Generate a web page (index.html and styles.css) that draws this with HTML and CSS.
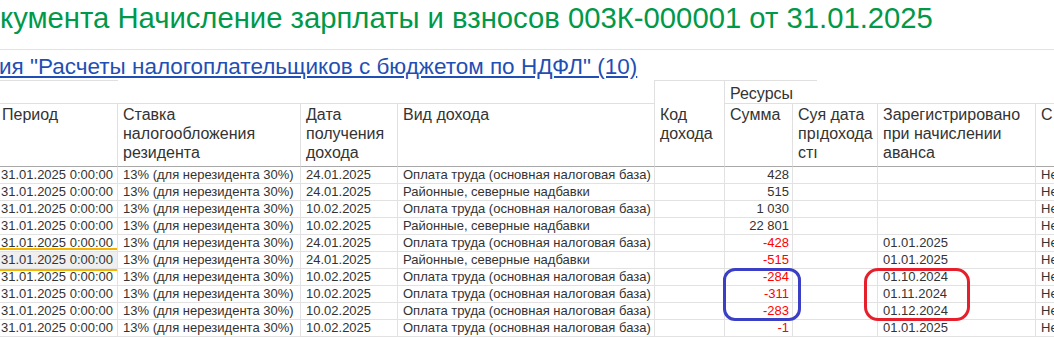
FILE: index.html
```html
<!DOCTYPE html>
<html lang="ru">
<head>
<meta charset="utf-8">
<title>Движения документа</title>
<link rel="stylesheet" href="styles.css">
</head>
<body>
<div class="title">кумента Начисление зарплаты и взносов 003К-000001 от 31.01.2025</div>
<div class="linkbar"><a class="link" href="#">ия "Расчеты налогоплательщиков с бюджетом по НДФЛ" (10)</a></div>
<div class="table">
  <div class="grid head">
    <div class="h-blank"></div>
    <div class="h-code">Код<br>дохода</div>
    <div class="h-res">Ресурсы</div>
    <div class="hc">Период</div>
    <div class="hc">Ставка<br>налогообложения<br>резидента</div>
    <div class="hc">Дата<br>получения<br>дохода</div>
    <div class="hc">Вид дохода</div>
    <div class="hc">Сумма</div>
    <div class="hc">Суя дата<br>прıдохода<br>стı</div>
    <div class="hc">Зарегистрировано<br>при начислении<br>аванса</div>
    <div class="hc last">С</div>
  </div>
  <div class="grid body">
    <div class="c c1">31.01.2025 0:00:00</div><div class="c">13% (для нерезидента 30%)</div><div class="c">24.01.2025</div><div class="c">Оплата труда (основная налоговая база)</div><div class="c"></div><div class="c num">428</div><div class="c"></div><div class="c"></div><div class="c last">Нет</div>
    <div class="c c1">31.01.2025 0:00:00</div><div class="c">13% (для нерезидента 30%)</div><div class="c">24.01.2025</div><div class="c">Районные, северные надбавки</div><div class="c"></div><div class="c num">515</div><div class="c"></div><div class="c"></div><div class="c last">Нет</div>
    <div class="c c1">31.01.2025 0:00:00</div><div class="c">13% (для нерезидента 30%)</div><div class="c">10.02.2025</div><div class="c">Оплата труда (основная налоговая база)</div><div class="c"></div><div class="c num">1&nbsp;030</div><div class="c"></div><div class="c"></div><div class="c last">Нет</div>
    <div class="c c1">31.01.2025 0:00:00</div><div class="c">13% (для нерезидента 30%)</div><div class="c">10.02.2025</div><div class="c">Районные, северные надбавки</div><div class="c"></div><div class="c num">22&nbsp;801</div><div class="c"></div><div class="c"></div><div class="c last">Нет</div>
    <div class="c c1">31.01.2025 0:00:00</div><div class="c">13% (для нерезидента 30%)</div><div class="c">24.01.2025</div><div class="c">Оплата труда (основная налоговая база)</div><div class="c"></div><div class="c num neg">-428</div><div class="c"></div><div class="c">01.01.2025</div><div class="c last">Нет</div>
    <div class="c c1 sel">31.01.2025 0:00:00</div><div class="c">13% (для нерезидента 30%)</div><div class="c">24.01.2025</div><div class="c">Районные, северные надбавки</div><div class="c"></div><div class="c num neg">-515</div><div class="c"></div><div class="c">01.01.2025</div><div class="c last">Нет</div>
    <div class="c c1">31.01.2025 0:00:00</div><div class="c">13% (для нерезидента 30%)</div><div class="c">10.02.2025</div><div class="c">Оплата труда (основная налоговая база)</div><div class="c"></div><div class="c num neg">-284</div><div class="c"></div><div class="c">01.10.2024</div><div class="c last">Нет</div>
    <div class="c c1">31.01.2025 0:00:00</div><div class="c">13% (для нерезидента 30%)</div><div class="c">10.02.2025</div><div class="c">Оплата труда (основная налоговая база)</div><div class="c"></div><div class="c num neg">-311</div><div class="c"></div><div class="c">01.11.2024</div><div class="c last">Нет</div>
    <div class="c c1">31.01.2025 0:00:00</div><div class="c">13% (для нерезидента 30%)</div><div class="c">10.02.2025</div><div class="c">Оплата труда (основная налоговая база)</div><div class="c"></div><div class="c num neg">-283</div><div class="c"></div><div class="c">01.12.2024</div><div class="c last">Нет</div>
    <div class="c c1">31.01.2025 0:00:00</div><div class="c">13% (для нерезидента 30%)</div><div class="c">10.02.2025</div><div class="c">Оплата труда (основная налоговая база)</div><div class="c"></div><div class="c num neg">-1</div><div class="c"></div><div class="c">01.01.2025</div><div class="c last">Нет</div>
  </div>
  <div class="mark mark-blue"></div>
  <div class="mark mark-red"></div>
</div>
</body>
</html>
```
FILE: styles.css
```css
* { box-sizing: border-box; }
html, body { margin: 0; padding: 0; }
body {
  width: 1054px;
  height: 357px;
  overflow: hidden;
  background: #fff;
  color: #333;
  font-family: "Liberation Sans", Arial, sans-serif;
}
.title {
  height: 50px;
  padding-top: 2px;
  border-bottom: 1px solid #e3e3e3;
  font-size: 29.25px;
  line-height: 32px;
  color: #00994a;
  white-space: nowrap;
}
.linkbar {
  height: 30px;
  padding-top: 4px;
  font-size: 22.5px;
  line-height: 26px;
  white-space: nowrap;
}
.link {
  color: #1f4fb4;
  text-decoration: underline;
  margin-left: -1px;
}
.table {
  position: relative;
  margin-left: -3px;
  width: 1110px;
}
.grid {
  display: grid;
  grid-template-columns: 121px 183px 97px 257px 70px 68px 85px 158px 60px;
}
.head {
  grid-template-rows: 24px 63px;
  font-size: 16px;
  line-height: 19px;
}
.h-blank {
  grid-column: 1 / 5;
  grid-row: 1;
  border-bottom: 1px solid #e0e0e0;
  border-right: 1px solid #e0e0e0;
  background: linear-gradient(#e0e0e0, #e0e0e0) no-repeat 0 0 / 121px 1px;
}
.h-code {
  grid-column: 5;
  grid-row: 1 / 3;
  border-top: 1px solid #e0e0e0;
  border-right: 1px solid #e0e0e0;
  border-bottom: 1px solid #a9a9a9;
  padding: 24px 0 0 5px;
}
.h-res {
  grid-column: 6 / 10;
  grid-row: 1;
  border-bottom: 1px solid #e0e0e0;
  padding: 4px 0 0 5px;
  background: linear-gradient(#e0e0e0, #e0e0e0) no-repeat 0 0 / 92px 1px;
}
.hc {
  grid-row: 2;
  border-right: 1px solid #e0e0e0;
  border-bottom: 1px solid #a9a9a9;
  padding: 1px 0 0 5px;
  white-space: nowrap;
  overflow: hidden;
}
.hc:nth-child(4) { grid-column: 1; }
.hc:nth-child(5) { grid-column: 2; }
.hc:nth-child(6) { grid-column: 3; }
.hc:nth-child(7) { grid-column: 4; }
.hc:nth-child(8) { grid-column: 6; }
.hc:nth-child(9) { grid-column: 7; }
.hc:nth-child(10) { grid-column: 8; }
.hc:nth-child(11) { grid-column: 9; }
.body {
  grid-auto-rows: 17px;
  font-size: 13px;
  line-height: 16px;
}
.c {
  border-right: 1px solid #e2e2e2;
  border-bottom: 1px solid #e2e2e2;
  padding: 0 5px;
  white-space: nowrap;
  overflow: hidden;
}
.c1 { padding-left: 4px; }
.last { border-right: 0; }
.num { text-align: right; padding-right: 3px; }
.neg { color: #f00; }
.sel {
  position: relative;
  overflow: visible;
  background: #efefef;
}
.sel::before,
.sel::after {
  content: "";
  position: absolute;
  left: 0;
  right: 0;
  height: 2px;
  background: #f5b400;
}
.sel::before { top: -4px; }
.sel::after { bottom: -3px; }
.mark {
  position: absolute;
  top: 188px;
  height: 53px;
  border: 3px solid;
}
.mark-blue {
  left: 726px;
  width: 78px;
  border-color: #3a3fc6;
  border-radius: 12px;
}
.mark-red {
  left: 867px;
  width: 106px;
  border-color: #e5202c;
  border-radius: 14px;
}
```
